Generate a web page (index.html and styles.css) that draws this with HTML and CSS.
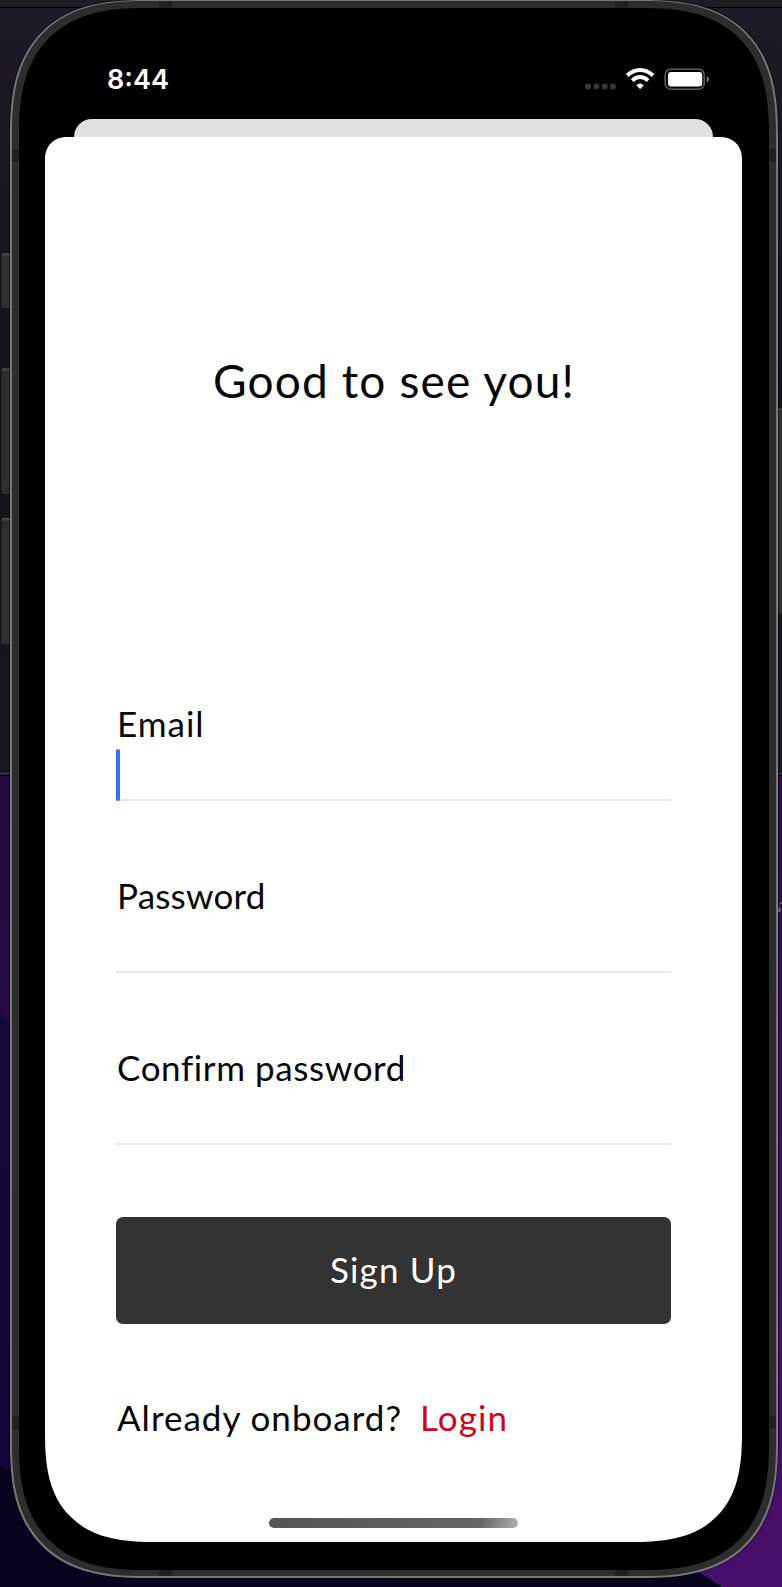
FILE: index.html
```html
<!DOCTYPE html>
<html lang="en">
<head>
<meta charset="utf-8">
<title>Sign Up</title>
<link rel="stylesheet" href="styles.css">
</head>
<body>
<div class="desktop">
  <svg class="wallpaper" width="782" height="1587" viewBox="0 0 782 1587" aria-hidden="true">
    <defs>
      <linearGradient id="win" x1="0" y1="0" x2="0" y2="1"><stop offset="0" stop-color="#1e1b28"/><stop offset=".5" stop-color="#14121a"/><stop offset="1" stop-color="#19181e"/></linearGradient>
      <linearGradient id="left" x1="0" y1="0" x2="0" y2="1"><stop offset="0" stop-color="#220b40"/><stop offset="1" stop-color="#2a0b50"/></linearGradient>
      <linearGradient id="navy" x1="0" y1="0" x2="0" y2="1"><stop offset="0" stop-color="#150938"/><stop offset="1" stop-color="#10043a"/></linearGradient>
      <linearGradient id="right" x1="0" y1="0" x2="0" y2="1"><stop offset="0" stop-color="#2b0f4e"/><stop offset=".5" stop-color="#3c0f5c"/><stop offset="1" stop-color="#480f6a"/></linearGradient>
      <linearGradient id="key" x1="0" y1="0" x2="0" y2="1"><stop offset="0" stop-color="#555"/><stop offset="1" stop-color="#2e2e2c"/></linearGradient>
    </defs>
    <rect width="782" height="775" fill="url(#win)"/>
    <rect width="782" height="7" fill="#1d1d23"/>
    <rect y="7" width="782" height="1" fill="#000"/>
    <rect y="773" width="782" height="1.500" fill="#454448"/>
    <rect y="774.500" width="782" height="1.500" fill="#050308"/>
    <rect y="776" width="391" height="811" fill="url(#left)"/>
    <path d="M0 1013L12 1025H391V1587H0Z" fill="url(#navy)"/>
    <path d="M0 1466Q60 1492 391 1540V1587H0Z" fill="#08031e"/>
    <rect x="391" y="776" width="391" height="811" fill="url(#right)"/>
    <path d="M391 1560H680L722 1587H391Z" fill="#07031c"/>
    <path d="M780 902.500h2v1.500h-2zM778 907.500h2l1 2.500-1 2h-2z" fill="#77687f"/>
    <g fill="#2e2e2c">
      <rect x="1.500" y="253.500" width="12" height="54.500" rx="2"/>
      <rect x="1.500" y="368.500" width="12" height="125.500" rx="2"/>
      <rect x="1.500" y="518" width="12" height="126" rx="2"/>
      <rect x="770" y="409" width="12" height="205"/>
    </g>
    <g fill="url(#key)">
      <rect x="2" y="253.500" width="10" height="3"/>
      <rect x="2" y="368.500" width="10" height="3"/>
      <rect x="2" y="518" width="10" height="3"/>
      <rect x="770" y="408.500" width="12" height="2"/>
    </g>
  </svg>
  <div class="phone">
    <i class="seam top l"></i><i class="seam top r"></i>
    <i class="seam bottom l"></i><i class="seam bottom r"></i>
    <i class="seam left u"></i><i class="seam left d"></i>
    <i class="seam right u"></i><i class="seam right d"></i>
    <div class="bezel">
      <header class="status">
        <span class="time">8:44</span>
        <svg class="indicators" width="124" height="24" viewBox="585 67 124 24" aria-label="Status icons">
          <g fill="#3a3a3a"><rect x="585.300" y="83.700" width="5.600" height="5.600" rx="1.800"/><rect x="593.600" y="83.700" width="5.600" height="5.600" rx="1.800"/><rect x="601.900" y="83.700" width="5.600" height="5.600" rx="1.800"/><rect x="610.200" y="83.700" width="5.600" height="5.600" rx="1.800"/></g>
          <g fill="none" stroke="#fff" stroke-width="4">
            <path d="M627.200 75.500Q633 70 640.100 70T653 75.500"/>
            <path d="M632.200 80.600Q635.800 77.100 640.100 77.100T648 80.600"/>
          </g>
          <path d="M636.400 85.200Q640.100 82 643.800 85.200L640.800 88.600Q640.100 89.200 639.400 88.600Z" fill="#fff"/>
          <rect x="665.200" y="69.200" width="39" height="20" rx="5.500" fill="none" stroke="#5e5e5e" stroke-width="1.500"/>
          <rect x="668" y="72" width="34.200" height="14.600" rx="3" fill="#fff"/>
          <path d="M706.700 76Q709 77 709 79.200T706.700 82.500Z" fill="#777"/>
        </svg>
      </header>
      <div class="behind"></div>
      <main class="sheet">
        <h1 class="title">Good to see you!</h1>
        <form class="form">
          <label class="field email"><span class="label">Email</span><span class="entry"><i class="caret"></i></span></label>
          <label class="field pass"><span class="label">Password</span><span class="entry"></span></label>
          <label class="field confirm"><span class="label">Confirm password</span><span class="entry"></span></label>
          <button class="submit" type="button">Sign Up</button>
        </form>
        <p class="switch"><span class="ask">Already onboard?</span><a class="login">Login</a></p>
        <div class="home"></div>
      </main>
    </div>
  </div>
</div>
</body>
</html>
```
FILE: styles.css
```css
* { box-sizing: border-box; }
body { margin: 0; background: #0c0620; font-family: Lato, "Open Sans", sans-serif; color: #060606; }
.desktop { position: relative; width: 782px; height: 1587px; overflow: hidden; padding: 0 4px 9px 10px; }
.wallpaper { position: absolute; left: 0; top: 0; }
.phone { position: relative; height: 1578px; padding: 7px 7px 6px; border: 2px solid #777; border-top-width: 1px; border-radius: 108px; background: #2d2d2d; box-shadow: 0 0 2px #000; }
.bezel { display: flex; flex-direction: column; align-items: center; height: 100%; padding: 0 27px 28px 26px; border-radius: 100px; background: #000; position: relative; }
.seam { position: absolute; background: #202020; }
.top, .bottom { width: 13px; height: 7px; }
.left, .right { width: 7px; height: 13px; }
.top { top: 0; } .bottom { bottom: 0; } .left { left: 0; } .right { right: 0; }
.l { left: 147px; } .r { right: 148px; } .u { top: 148px; } .d { bottom: 147px; }

.status { display: flex; justify-content: space-between; align-items: flex-start; width: 100%; height: 111px; flex: none; padding: 54px 33px 0 62px; }
.time { margin-top: 2px; font: 600 27px/32px Inter, sans-serif; color: #fff; }
.indicators { margin-top: 5px; }
.behind { flex: none; width: 639px; height: 38px; margin-bottom: -20px; border-radius: 18px 18px 0 0; background: #e0e0e0; }
.sheet { display: flex; flex-direction: column; width: 697px; flex: 1; padding: 216px 71px 14px 71px; border-radius: 20px 20px 82px 82px; background: #fff; position: relative; }
.title { margin: 0 0 292px; padding-left: 1px; font-size: 46px; line-height: 56px; font-weight: 400; letter-spacing: 1.15px; text-align: center; white-space: nowrap; }
.form { display: flex; flex-direction: column; }
.field { display: block; height: 100px; margin-bottom: 72px; border-bottom: 2px solid #e7e7e8; font-size: 35px; line-height: 44px; }
.email { letter-spacing: 1px; }
.pass { letter-spacing: .2px; }
.confirm { letter-spacing: .6px; }
.label, .entry { display: block; }
.label { padding-left: 1px; white-space: nowrap; }
.entry { height: 56px; padding-top: 4px; }
.caret { display: block; position: relative; width: 3.5px; height: 52px; border-radius: 2px; background: #3273f0; }
.submit { height: 107px; padding: 0 0 3px; border: 0; border-radius: 7px; background: #333; color: #fff; font: 400 35px/44px Lato, sans-serif; letter-spacing: 1.2px; }
.switch { display: flex; gap: 18px; margin: 71px 0 0; padding-left: 1px; font-size: 35px; line-height: 44px; letter-spacing: 1px; white-space: nowrap; }
.login { color: #d0021b; letter-spacing: 1.1px; }
.home { width: 249px; height: 10px; margin: auto auto 0; border-radius: 5px; background: linear-gradient(100deg, #555 0, #666 85%, #b0b0b0 100%); }

@supports (corner-shape: superellipse(1.4)) {
  .phone { border-radius: 135px; corner-shape: superellipse(1.36); }
  .bezel { border-radius: 127px; corner-shape: superellipse(1.36); }
  .sheet { border-radius: 22px 22px 110px 110px; corner-shape: superellipse(1.1) superellipse(1.1) superellipse(1.4) superellipse(1.4); }
}
```
